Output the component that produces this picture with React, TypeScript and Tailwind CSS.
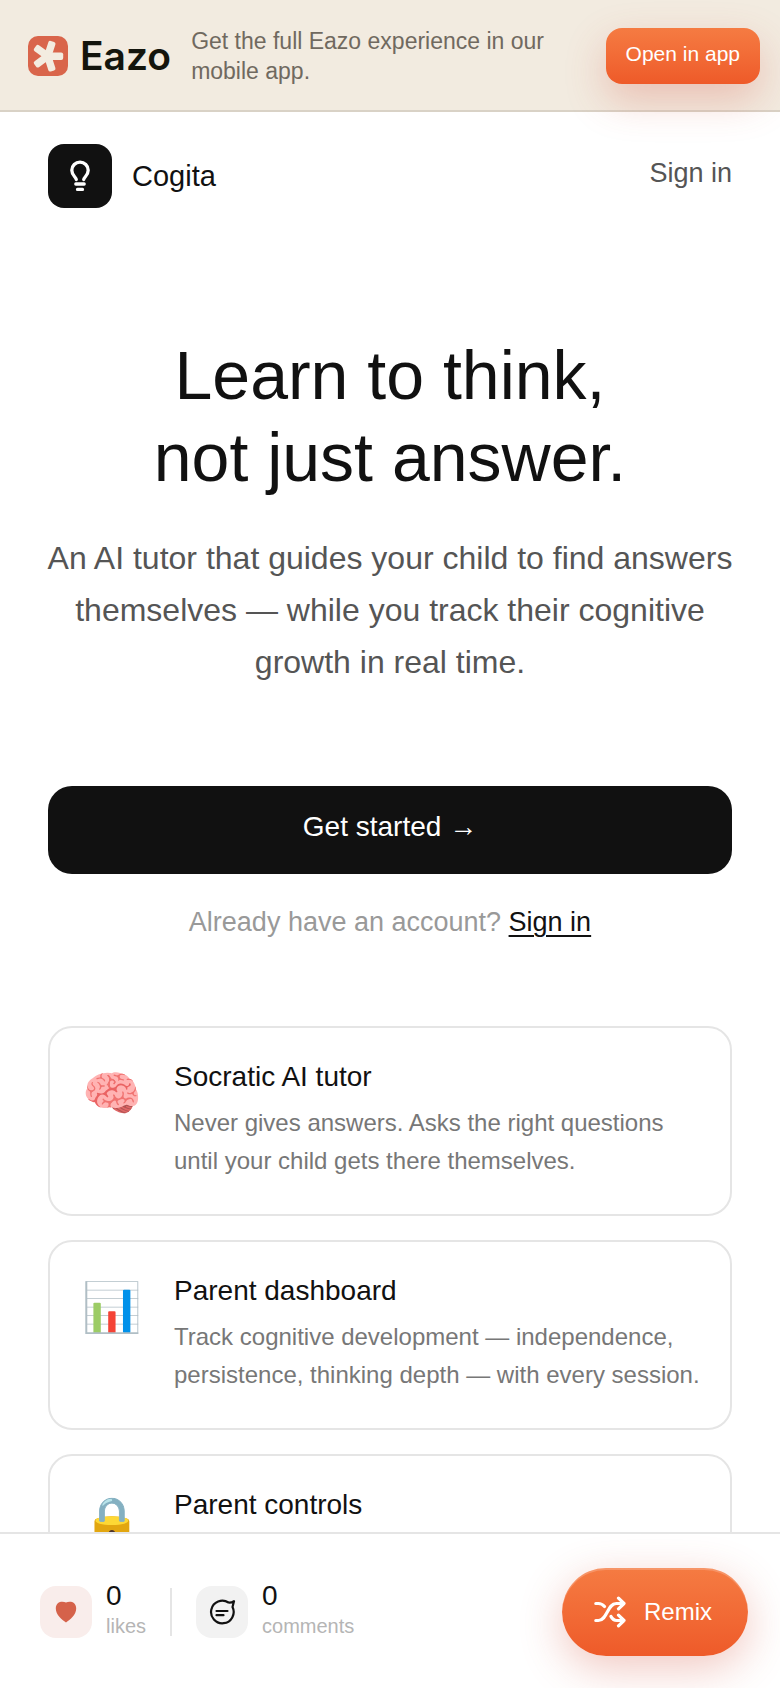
import type { ReactNode } from "react";

const sans = "font-['Liberation_Sans','Noto_Color_Emoji',sans-serif]";

function EazoMark() {
  return (
    <svg className="size-10 shrink-0" viewBox="0 0 40 40" aria-hidden="true">
      <rect width="40" height="40" rx="10" fill="#d9654b" />
      <g fill="#f3ece0" transform="translate(19.700 20.200)">
        {[0, 72, 144, 216, 288].map((angle) => (
          <rect key={angle} x="-1" y="-3.700" width="16.500" height="7.400" rx="2" transform={`rotate(${angle})`} />
        ))}
      </g>
    </svg>
  );
}

function BulbIcon() {
  return (
    <svg className="h-8 w-6" viewBox="0 0 24 32" fill="none" stroke="#fff" strokeWidth="3.300" strokeLinecap="round" strokeLinejoin="round" aria-hidden="true">
      <path d="M8.300 19.500c-.3-2.500-4.500-4-4.500-9.200a8.200 8.200 0 0 1 16.400 0c0 5.200-4.200 6.700-4.500 9.200" />
      <path d="M7.800 24h8.400M9.500 29.400h5" />
    </svg>
  );
}

function HeartIcon() {
  return (
    <svg className="size-6" viewBox="0 0 24 24" aria-hidden="true">
      <path d="M12 2.600C8.500.6 1.800 1.500 1.800 8.500c0 6.500 6 11 10.200 14 4.200-3 10.200-7.500 10.200-14 0-7-6.700-7.900-10.200-5.900z" fill="#d5624a" />
    </svg>
  );
}

function CommentIcon() {
  return (
    <svg className="size-7" viewBox="0 0 28 28" fill="none" stroke="#111" strokeWidth="2.200" strokeLinecap="round" strokeLinejoin="round" aria-hidden="true">
      <path d="M20.500 4.500A11.300 11.300 0 1 0 24.500 9L26 3.200C24 4.400 22.500 4.700 20.500 4.500z" />
      <path d="M8.500 13h11M8.500 17.200h7" />
    </svg>
  );
}

function ShuffleIcon() {
  return (
    <svg className="size-8" viewBox="0 0 32 32" fill="none" stroke="#fff" strokeWidth="3.200" strokeLinecap="round" strokeLinejoin="round" aria-hidden="true">
      <path d="M1.800 7.500h2.500c3 0 4.500 1 6.200 3M1.800 24.500h2.500c9 0 9-17 18-17h7.500M24.500 2.200l5.500 5.300-5.500 5.300M17 20.500c1.500 3 3 4 6 4h7M24.500 19.200l5.500 5.300-5.500 5.300" />
    </svg>
  );
}

const features = [
  {
    icon: "🧠",
    title: "Socratic AI tutor",
    text: "Never gives answers. Asks the right questions until your child gets there themselves.",
  },
  {
    icon: "📊",
    title: "Parent dashboard",
    text: "Track cognitive development — independence, persistence, thinking depth — with every session.",
  },
  { icon: "🔒", title: "Parent controls", text: "" },
];

function Stat({ label, tone, children }: { label: string; tone: string; children: ReactNode }) {
  return (
    <button type="button" className="flex items-center gap-[14px] text-left">
      <span className={`flex size-[52px] items-center justify-center rounded-2xl ${tone}`}>{children}</span>
      <span className="flex flex-col pb-1">
        <span className="text-[28px] leading-8 text-[#111]">0</span>
        <span className="text-xl leading-7 text-[#b5b5b5]">{label}</span>
      </span>
    </button>
  );
}

export default function App() {
  return (
    <div className={`flex h-screen flex-col bg-white text-[#111] ${sans}`}>
      <aside className="relative z-10 flex items-center gap-5 border-b-2 border-[#d9d2c6] bg-[#f2ebe0] pt-[26px] pr-5 pb-6 pl-7">
        <div className="flex items-center gap-3">
          <EazoMark />
          <span className="font-['Inter',sans-serif] text-[39px] leading-10 font-semibold text-[#14150d]">Eazo</span>
        </div>
        <p className="flex-1 text-[23px] leading-[30px] text-[#70695f]">
          Get the full Eazo experience in our mobile app.
        </p>
        <button
          type="button"
          className="h-14 rounded-2xl bg-linear-to-b from-[#f57b42] to-[#ee5a29] px-5 pb-1 text-[21px] leading-7 whitespace-nowrap text-white shadow-[0_16px_40px_rgba(213,80,60,0.28)]"
        >
          Open in app
        </button>
      </aside>

      <main className="min-h-0 flex-1 overflow-y-auto px-12 pb-12 [scrollbar-width:none]">
        <header className="flex items-center justify-between pt-8">
          <div className="flex items-center gap-5">
            <span className="flex size-16 items-center justify-center rounded-2xl bg-[#111]">
              <BulbIcon />
            </span>
            <span className="text-[29px] leading-9">Cogita</span>
          </div>
          <a href="#sign-in" className="pb-[6px] text-[27px] leading-9 text-[#555]">
            Sign in
          </a>
        </header>

        <section className="pt-[126px] text-center">
          <h1 className="text-[68px] leading-[82px]">
            Learn to think,
            <br />
            not just answer.
          </h1>
          <p className="-mx-2 pt-[34px] text-[32px] leading-[52px] text-[#555]">
            An AI tutor that guides your child to find answers themselves — while you track their cognitive growth in
            real time.
          </p>
          <button type="button" className="mt-[98px] h-[88px] w-full rounded-3xl bg-[#111] pb-[6px] text-[28px] text-white">
            Get started →
          </button>
          <p className="pt-7 text-[27px] leading-10 text-[#999]">
            Already have an account?{" "}
            <a href="#sign-in" className="text-[#111] underline decoration-2 underline-offset-4">
              Sign in
            </a>
          </p>
        </section>

        <section className="flex flex-col gap-6 pt-[84px]">
          {features.map((f) => (
            <article key={f.title} className="flex min-h-[190px] gap-8 rounded-3xl border-2 border-[#e5e5e5] pt-7 pr-6 pl-8">
              <span className="w-[60px] pt-2 text-5xl leading-[60px]">{f.icon}</span>
              <div className="flex-1">
                <h2 className="pb-[6px] text-[28px] leading-[42px]">{f.title}</h2>
                <p className="text-2xl leading-[38px] text-[#777]">{f.text}</p>
              </div>
            </article>
          ))}
        </section>
      </main>

      <footer className="flex items-center justify-between border-t-2 border-[#e5e5e5] bg-white pt-[34px] pr-8 pb-8 pl-10">
        <div className="flex items-center gap-6">
          <Stat label="likes" tone="bg-[#f9edeb]">
            <HeartIcon />
          </Stat>
          <span className="h-12 w-[2px] bg-[#e5e5e5]" />
          <Stat label="comments" tone="bg-[#f2f2f2]">
            <CommentIcon />
          </Stat>
        </div>
        <button
          type="button"
          className="flex h-[88px] items-center gap-[18px] rounded-full bg-linear-to-b from-[#f57b42] to-[#ee5a29] pr-9 pl-8 text-2xl text-white shadow-[0_12px_44px_rgba(213,80,60,0.32),inset_0_2px_0_rgba(255,255,255,0.2)]"
        >
          <ShuffleIcon />
          Remix
        </button>
      </footer>
    </div>
  );
}
